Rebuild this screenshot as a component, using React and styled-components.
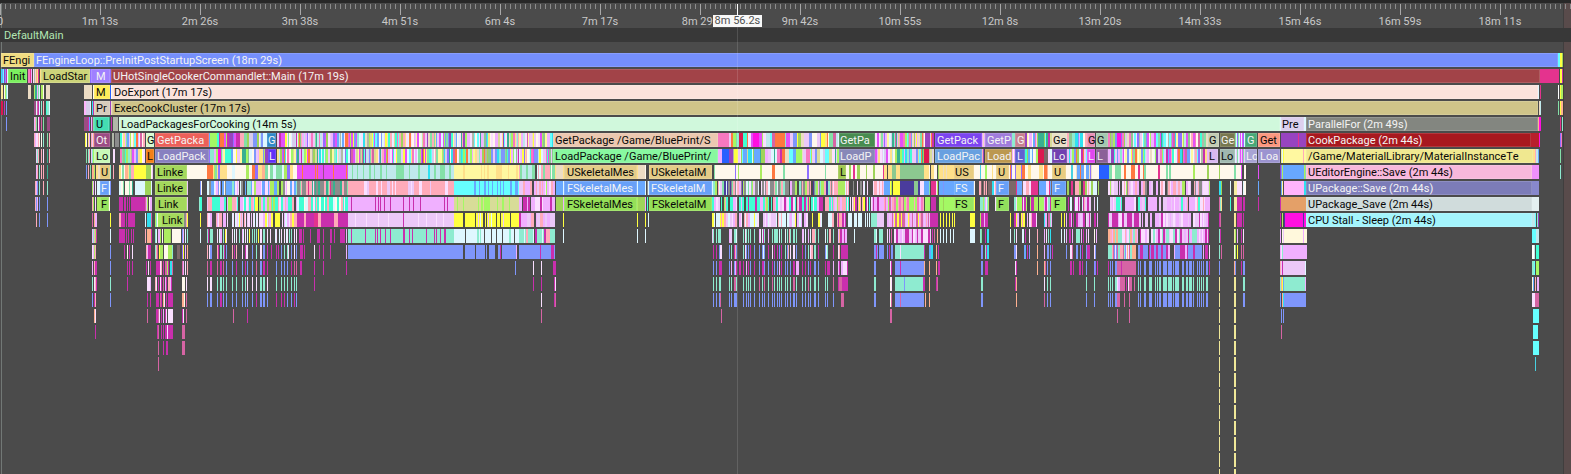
import React from 'react';
import styled, { createGlobalStyle } from 'styled-components';

const Global = createGlobalStyle`
  * { box-sizing: border-box; }
  body { margin: 0; background: #4b4b4b; font-family: Roboto, "Liberation Sans", sans-serif; font-size: 11px; font-kerning: none; }
`;

/* Units of the time axis that span the full track width. */
const SPAN = 1571;

const INK = {
  c: '#8eebd0', b: '#7f96fb', m: '#c92fad', p: '#ecc8f8', k: '#f0b0ff', w: '#fff8ec',
  i: '#def7ff', y: '#ffff40', g: '#acec60', o: '#9fd45a', s: '#ffabba', t: '#40ffd4',
  r: '#d664a4', a: '#66ffff', n: '#8c8c8c', h: '#fadfff', u: '#4a3c9c', e: '#ffb090',
  v: '#9070ff', d: '#e4338e', z: '#38b090', q: '#ffe08a', l: '#68a8ff', f: '#30e0f0',
  x: '#4b4b4b', j: '#e450f8', K: '#c0e8ec', G: '#a4f864', B: '#2860ff', T: '#84e0a8',
  Y: '#fff8a0', L: '#f4eca0', O: '#ff7840', D: '#d8dc98', P: '#9c4c84', M: '#ff10e0',
  C: '#48d0e0', S: '#f0e898', R: '#dc1850', E: '#ecdcc4', A: '#b0b8a8', W: '#ffffff',
  F: '#ffb4fc', H: '#e4a068', Q: '#fff8dc', N: '#8cc890', U: '#7c6868', V: '#9844c0',
  J: '#f878c0', Z: '#d8ccec', X: '#b8202c', I: '#f090fc', _: '#8888cc', $: '#e4f0f0',
};

function random(seed) {
  let s = seed * 7919 + 17;
  return () => {
    s = (s * 1103515245 + 12345) & 0x7fffffff;
    return (s >> 8) / 0x7fffff;
  };
}

/* Dense run of short calls between two times. */
function fill(from, to, palette, seed = 1, max = 2) {
  const rnd = random(seed + from);
  const out = [];
  let x = from;
  while (x < to) {
    const w = Math.min(1 + Math.floor(rnd() * max), to - x);
    out.push({ x, w, c: palette[Math.floor(rnd() * palette.length) % palette.length] });
    x += w;
  }
  return out;
}

/* "start:width colour" tokens; the width is 1 when left out. */
function bars(text) {
  return text.trim().split(/\s+/).map((t) => {
    const m = t.match(/^(\d+)(?::(\d+))?([\w$])$/);
    return { x: +m[1], w: m[2] ? +m[2] : 1, c: m[3] };
  });
}

/* Calls that recur at the same times on several depths. */
function columns(list, palette, seed) {
  const rnd = random(seed);
  return list.trim().split(/\s+/).map((t) => {
    const [x, w] = t.split(':');
    return { x: +x, w: +(w || 1), c: palette[Math.floor(rnd() * palette.length) % palette.length] };
  });
}

const MID = '713 716 719:2 729 731 734:2 736 743 746 748 750 754 759 762 764 768 772 774 777 779 781 785 787 790 793:2 796 802 805 808 810 814:2 818 825 827 833';
const EARLY = '207 210:2 217 220:2 223 226 232 236 242 245 247 252 256 260:2 263:2 267 276 281 284 287 291 294 296';
const LATE = '1138 1140 1144:2 1149:3 1155 1157 1159:2 1163:4 1168:4 1173 1175:4 1182:2 1186:2 1189:3 1193 1197 1199 1201 1203 1206:2';
const LATE_HEAD = '1108 1110 1112 1115:2';

const RAINBOW = 'cbmpkwiygostrahqlfGjTYJZKAjEvhiwpkDNOVz';

const t = (x, end, bg, text, light = 0, indent = 2) => ({ x, end, bg, text, light, indent });

const ROWS = [
  {
    labels: [t(1, 34, '#f0dc82', 'FEngi'), t(34, 1558, '#758ffc', 'FEngineLoop::PreInitPostStartupScreen (18m 29s)', 1)],
    bars: [...bars('1558:2a 1560:2y 1562o')],
  },
  {
    labels: [t(8, 27, '#7cf060', 'Init'), t(41, 90, '#cdd47a', 'LoadStar'), t(91, 110, '#a080ff', 'M', 1, 5), t(111, 1540, '#a24348', 'UHotSingleCookerCommandlet::Main (17m 19s)', 1)],
    bars: [...bars('1f 2l 3a 4V 5b 6m 7:1i 28:2J 30d 31k 33h 34A 35E 36e 37q 38d 40q 90v 110v 1540:19d 1560:2y 1562m')],
  },
  {
    labels: [t(94, 110, '#ffec5a', 'M'), t(112, 1538, '#fbe3dc', 'DoExport (17m 17s)')],
    bars: [...bars('1L 2q 4w 5g 6c 7:1i 28:3E 34g 35:2z 37k 38T 39i 41:2g 43w 46:2E 48:2E 84:8E 93w 110B 111w 1538i 1540d 1558W 1560y 1561:2g')],
  },
  {
    labels: [t(94, 110, '#d8ccbc', 'Pr'), t(112, 1538, '#cfc489', 'ExecCookCluster (17m 17s)')],
    bars: [...bars('1:2R 4m 6b 34:2P 36i 37r 38m 39i 41c 43s 46t 47:2c 49i 84:2F 86:4Z 90i 92f 93m 110V 111E 1539E 1540K 1558T 1560y 1561:2e')],
  },
  {
    labels: [t(94, 109, '#44ddb2', 'U'), t(119, 1280, '#d0f8dc', 'LoadPackagesForCooking (14m 5s)'), t(1281, 1304, '#dcd0ee', 'Pre', 0, 1), t(1306, 1538, '#838680', 'ParallelFor (2m 49s)', 1)],
    bars: [...bars('6b 34k 35s 36T 38h 39m 41r 43T 47:3P 84:4P 88m 89l 91k 92P 93T 109z 111m 113:5A 1280i 1304:2i 1538e 1539:2M 1560d 1562c')],
  },
  {
    labels: [
      t(94, 110, '#9c4c84', 'Ot', 1), t(146, 154, '#d8fbd0', 'G', 0, 1), t(155, 209, '#ec605a', 'GetPacka', 1), t(267, 276, '#3088c8', 'G', 1, 1),
      t(553, 718, '#ecc8b0', 'GetPackage /Game/BluePrint/S'), t(839, 875, '#488c50', 'GetPa', 1, 1), t(935, 982, '#7c44f0', 'GetPack', 1), t(985, 1012, '#a07cdc', 'GetP', 1),
      t(1015, 1025, '#c88090', 'G', 1), t(1052, 1067, '#e8e0c8', 'Ge', 0, 1), t(1087, 1095, '#e890b8', 'G', 0, 1), t(1096, 1108, '#a4c8b0', 'G', 0, 1),
      t(1208, 1219, '#c4ccb4', 'G', 0, 1), t(1220, 1235, '#787850', 'Ge', 1, 1), t(1245, 1257, '#48a878', 'G', 1), t(1258, 1280, '#fc9880', 'Get'), t(1306, 1531, '#a8181f', 'CookPackage (2m 44s)', 1),
    ],
    bars: [
      ...bars('34s 35k 36:2h 38s 39w 41w 43c 47T 49s 85y 86w 88q 89k 91s 92p 93e 112:2A 115:4n'), ...fill(120, 145, RAINBOW, 4), ...fill(209, 267, RAINBOW, 2, 4),
      ...bars('210:7G'), ...fill(277, 553, RAINBOW, 5, 2), ...fill(718, 839, RAINBOW, 6, 4), ...bars('722:7J 739:4R 753:6M 775:10O'),
      ...fill(875, 934, RAINBOW, 7), ...bars('925:5V'), ...fill(982, 985, 'cEk', 1), ...bars('1012:3c'), ...fill(1025, 1052, RAINBOW, 8), ...bars('1038:6z'),
      ...fill(1067, 1087, RAINBOW, 9, 3), ...fill(1108, 1208, RAINBOW, 10, 2), ...bars('1117:4M 1178:4v'), ...fill(1235, 1245, 'jTvyi', 3, 1),
      ...bars('1281:25V 1298d 1531:8X 1539M 1560v 1561J'),
    ],
  },
  {
    labels: [
      t(94, 110, '#c8f8b8', 'Lo'), t(146, 154, '#f48018', 'L', 0, 1), t(155, 209, '#8880c0', 'LoadPack', 1), t(268, 276, '#6030f8', 'L', 1, 1),
      t(553, 718, '#88f8a0', 'LoadPackage /Game/BluePrint/'), t(839, 875, '#8888b8', 'LoadP', 1, 1), t(935, 982, '#68a0e0', 'LoadPac', 1), t(985, 1012, '#bc9850', 'Load', 1),
      t(1015, 1025, '#6060d0', 'L', 1), t(1052, 1067, '#7040b0', 'Lo', 1, 1), t(1087, 1095, '#e048f0', 'L', 1, 1), t(1096, 1108, '#8c6098', 'L', 1, 1),
      t(1208, 1218, '#d8b8f0', 'L', 0, 1), t(1220, 1235, '#a0b8b0', 'Lo', 0, 1), t(1245, 1257, '#a8a4d4', 'Lo', 1, 1), t(1258, 1280, '#9c94d0', 'Loa', 1), t(1306, 1533, '#f0e890', '/Game/MaterialLibrary/MaterialInstanceTe'),
    ],
    bars: [
      ...bars('36p 37c 38s 41s 43h 47z 49s 86T 88c 89s 91p 92c 93G 113:2h'), ...fill(120, 145, RAINBOW, 14), ...fill(209, 268, RAINBOW, 12, 4), ...bars('218:3M 225:6t'),
      ...fill(277, 553, RAINBOW, 15, 2), ...bars('534:4b'), ...fill(718, 839, RAINBOW, 16, 4), ...bars('722:7B 734:4y 754:6l 796:6G'),
      ...fill(875, 934, RAINBOW, 17), ...bars('924:5R'), ...bars('982s 983V'), ...fill(1012, 1015, 'cwk'), ...fill(1025, 1052, RAINBOW, 18), ...bars('1038:6R 1044:4U'),
      ...fill(1067, 1087, RAINBOW, 19), ...fill(1108, 1208, RAINBOW, 20, 2), ...fill(1235, 1245, 'jiTwp', 3, 1),
      ...bars('1281L 1282i 1283y 1284:19Y 1303s 1304:2Y 1533:2q 1535s 1536:2K 1538l 1560T'),
    ],
  },
  {
    labels: [
      t(100, 110, '#e4c87c', 'U', 0, 1), t(155, 187, '#a4d85c', 'Linke'), t(564, 637, '#e4cc88', 'USkeletalMes', 0, 3), t(649, 712, '#e4cc88', 'USkeletalM'),
      t(838, 846, '#a0c850', 'L'), t(954, 974, '#e8cc80', 'US', 0, 1), t(996, 1009, '#e8cc80', 'U', 0, 2), t(1052, 1066, '#e8cc80', 'U', 0, 2), t(1306, 1532, '#f8b8dc', 'UEditorEngine::Save (2m 44s)'),
    ],
    bars: [
      ...bars('36k 37:1s 39c 41s 43s 47z 86b 88s 90T 92:2e 94g 96:2q 98:2E 110c 113s'), ...fill(119, 134, 'ssTeqw', 2, 3), ...bars('134:12y 146:5o 151w 152p'),
      ...bars('187:20w'), ...fill(207, 297, 'wwwwwqqevTgOi', 3, 3), ...bars('297:51j 302O 315O 317O 323P 333O 346O 348:106K 352T 357T 363T 369:2T 374T 380:2T 386T 396:8T 409T 418:2T 428:2f 434:2T 440:5T 449:2T'),
      ...bars('454:65Y 463:2q 481q 484q 487:2q 496:6q 508q 516:2q'), ...fill(519, 555, 'TTiKsswyT', 7, 2), ...bars('535:2x 555q 556:7E 563q 637:8q 638:7E 645x 648x 645w'),
      ...fill(712, 718, 'wTzx', 9), ...fill(718, 838, 'wwwwwwwwwwwOTgv', 10, 3), ...fill(846, 884, 'wwwwwwwwOdo', 11, 3), ...bars('884:3q 888:4q 892:4N 896:4q 900:24N 924:5q 929w 931:3q 934:3w 938o 939:15q 943E 946E'),
      ...fill(974, 996, 'wwwwqw', 13, 3), ...bars('980C 985:2G 992q'), ...fill(1009, 1052, 'wwwwqwvwO', 14, 3), ...bars('1016:5q 1039:4q 1047e'), ...fill(1066, 1099, 'wwwwwEwlw', 15, 3),
      ...bars('1071:2C 1080O 1090v 1099:10B'), ...fill(1109, 1207, 'wwwwwwwwwwwwwTOgd', 16, 3), ...bars('1207:2o 1209:32w 1219:1o 1234:2T 1241j 1244:2w 1258j 1280V 1281b 1282g 1283l 1284:20l 1304g 1305T 1532:7I 1560c'),
    ],
  },
  {
    labels: [
      t(100, 109, '#68a0f8', 'F', 1, 1), t(155, 187, '#a4d85c', 'Linke'), t(564, 637, '#68a0f8', 'FSkeletalMes', 1, 3), t(649, 712, '#68a0f8', 'FSkeletalM', 1),
      t(954, 974, '#68a8fc', 'FS', 1, 1), t(996, 1009, '#68a0f8', 'F', 1), t(1052, 1066, '#68a0f8', 'F', 1), t(1306, 1532, '#7c7cb8', 'UPackage::Save (2m 44s)', 1),
    ],
    bars: [
      ...bars('35s 36k 37b 39c 43s 47c 92g 93k 95h 97:3i 109i 110b 119:2i 121:2w 123T 125:4w 129T 130:2w 132z 135:10i 145:6o 151i 186w 187p 199x 200b 201w'),
      ...fill(207, 297, 'hhccknnllxgbwi', 22, 2), ...bars('228:4l'), ...fill(297, 348, 'nnnTshzsd', 23, 2), ...fill(348, 454, 'sssssssssssph', 24, 3), ...bars('454:65a 474:2l 479l 484:2l 488l 492l 497l 500l 503l 510:2l 515:3l'),
      ...fill(519, 555, 'ssshpkG', 26, 2), ...bars('532:2x 556:7l 563i 637i 638:7l 645i 647n 648i'), ...fill(712, 838, 'nnnspksihgcTux', 27, 2), ...bars('838:7g'), ...fill(845, 874, 'xxxhinsx', 28, 1),
      ...fill(874, 884, 'sshp', 2), ...bars('884:6l 890y 891g 893:3y'), ...fill(896, 924, 'uuuNTyh', 30, 4), ...bars('902:7u 924:5l 929T 931:5d 936h 937g 939:15l 943b 974w'),
      ...fill(979, 996, 'hsdTxUf', 31, 1), ...bars('989:3U 1009:6U'), ...fill(1015, 1052, 'ldhUxlhs', 32, 3), ...bars('1017:5l 1031:5d 1039:5l'), ...fill(1067, 1099, 'dhhxxiso', 33, 2),
      ...fill(1108, 1210, 'sshhknpxgp', 34, 2), ...bars('1219:2f 1221o 1230i 1234:3L 1237:5h 1243i 1244:2w 1258l 1281l 1282Y 1284:20F 1304:2f 1532:7_'),
    ],
  },
  {
    labels: [
      t(100, 109, '#94e05c', 'F', 0, 1), t(155, 187, '#a4d85c', 'Link', 0, 3), t(564, 637, '#94e058', 'FSkeletalMes', 0, 3), t(649, 712, '#94e058', 'FSkeletalM', 0, 3),
      t(954, 974, '#98e860', 'FS', 0, 1), t(996, 1009, '#90e05c', 'F'), t(1052, 1066, '#94e85c', 'F'), t(1306, 1532, '#d0dcdc', 'UPackage_Save (2m 44s)'),
    ],
    bars: [
      ...bars('35s 36b 37k 39b 47b 92s 93g 95h 97:3g 109w 119:4m 124:2m 127m 129m 131:14m 145r 146k 147g 149w 150:2k 186i 187p 199c 200:2t'),
      ...fill(207, 297, 'tthkxpgsyt', 42, 2), ...bars('213:7t 228:4G'), ...fill(297, 348, 'ttthwsi', 43, 2), ...bars('348:106k 351m 375m 378m 380m 384m 390m 403m 409m 413m 420m 444m 447m'),
      ...bars('454:65D 457G 463G 478G 481:2G 484:6G 497G 502:2G 509G'),
      ...fill(519, 555, 'kkkkhmx', 46, 2), ...bars('556:7o 563k 637g 638:7o 645k 647t'), ...fill(712, 838, 'ttttksshpxgm', 47, 2), ...fill(838, 846, 'skss', 1), ...fill(846, 872, 'ymxsth', 48, 1),
      ...fill(872, 884, 'kkm', 49, 3), ...fill(884, 924, 'GGrJJks', 50, 2), ...bars('925:5G 931:5m 939:15G 943o 974y'), ...fill(979, 990, 'hgcskx', 51, 1), ...bars('995h'),
      ...fill(1014, 1052, 'mkhGxgxc', 52, 2), ...bars('1017:5G 1031:3m 1039:5G'), ...fill(1067, 1098, 'mhsxxiyp', 53, 2), ...fill(1108, 1210, 'kkkkptshx', 54, 2),
      ...bars('1219r 1220c 1221q 1230t 1234:3L 1237:5m 1243:2m 1258m 1280m 1281:25H 1532:7$'),
    ],
  },
  {
    labels: [t(161, 184, '#a4d85c', 'Link', 0, 1), t(1306, 1532, '#a4f4fc', 'CPU Stall - Sleep (2m 44s)')],
    bars: [
      ...bars('36s 39b 47b 92r 94e 95:2k 110y 119:2s 121:4m 126m 128:2m 130:5m 145i 147:4f 151r 155g 156c 157w 158:3g 184:2n 186s 187y 200y'),
      ...fill(207, 212, 'khs', 1), ...fill(216, 228, 'hxksx', 1), ...fill(232, 260, 'yhhxspi', 61, 1), ...fill(260, 297, 'ykhxsyi', 62, 2), ...fill(297, 348, 'mmmmmmds', 63, 4), ...bars('348:106p 355h 366h 378h 388h 403m 418h 426h 436h 443h'),
      ...bars('454:65y 463:2x 475x 478p 480i 483:2x 486x 488p 491i 496x 500x 503p 510x'), ...fill(519, 555, 'pppkkms', 66, 3), ...bars('534:2x 563y 637y 645y 648i'), ...fill(712, 838, 'hhppkisxyix', 67, 2), ...fill(838, 846, 'ksme', 1), ...fill(847, 870, 'iixx', 68, 1), ...fill(871, 884, 'cpppp', 3, 4),
      ...fill(887, 930, 'rsykkrp', 69, 1), ...bars('930:8m 940y 943y 946y 949y 952y 954y 970:5y 980g 981:3m 984k 985:3m 1010y'),
      ...fill(1014, 1038, 'khsymxmx', 70, 2), ...fill(1043, 1053, 'rkxcf', 71, 1), ...bars('1061y 1064y 1066:1k 1069:2m 1071k 1073:1m'), ...fill(1076, 1098, 'pkxmxih', 72, 2),
      ...fill(1108, 1138, 'mmmmphk', 73, 3), ...fill(1138, 1208, 'kpmkphx', 74, 2), ...bars('1208m 1219m 1220r 1234L 1235q 1237:5m 1243m 1258x 1280m 1282g 1284u 1285:19M 1303u 1304:2M 1532:3K 1535a 1537c 1538V'),
    ],
  },
  {
    bars: [
      ...bars('92k 93c 94s 95g 96m 110i 119:6m 126m 128m 131m 133m 145s 147:4e 151m 155c 156i 158:2k 160g 162w 164:7g 170o 172:9w 182b 183k 185i 187c 200i'),
      ...columns(EARLY, 'ccchihkc', 80), ...columns('208 212 219 225 234 239 243 249 254 258 270 275 279 286 289', 'imchy', 81), ...bars('299:3m 303m 310m 317:3m 323m 330:2m 334m 340:5m 346k'),
      ...bars('348:106c 351m 365m 375m 377m 380m 385m 390m 403:2m 409m 412m 426m 434m 436m 440m 444:2m 454:65i 465x 477:2c 480c 484x 491x 496x 502x 509:2c 514x'), ...fill(519, 555, 'ccccims', 84, 2), ...bars('534:1x 563i 637i 645i'),
      ...columns(MID, 'ccccki', 85), ...columns('712 718:3 730:2 745 760 763 775:2 789 803 812:3 829:2', 'cmksph', 86), ...fill(838, 847, 'mmke', 1), ...bars('854i 874:2c 876i 879:4c 887h 889k 891r'),
      ...fill(894, 930, 'ppkmmh', 87, 2), ...bars('930p 932m 934r 937e 940i 943i 946i 950i 953i 970:5i 980c 981T 985m 987:2f 1010i 1014c 1016h 1022:2i 1025m 1029h 1037s 1044k 1046h 1048c 1050f'),
      ...bars('1061i 1064i 1066k 1069:2m 1072k 1076:4c 1081k 1083m 1086k 1088h 1094w 1096k'), ...fill(1108, 1138, 'cchkse', 88, 2), ...fill(1138, 1208, 'cchpkmx', 89, 2), ...bars('1208m 1219c 1220m 1234L 1235g 1237k 1241m 1243h'),
      ...bars('1280k 1282:2w 1283p 1284:19Q 1303k 1304:3Q 1532:4a 1536:3K'),
    ],
  },
  {
    bars: [
      ...bars('92h 93k 94g 95s 110b 124m 127w 129m 132h 146s 147k 148:3m 155c 156s 157r 159y 160:3g 164:4w 168:4g 172c 177:3U 182v 183y 185k 187e'),
      ...columns(EARLY, 'bbchms', 90), ...columns('209 218 224 234 246 271 278 288', 'hbm', 91), ...bars('300:3m 304m 314h 319m 323m 330m 346k 348:115b 465:10b 476:9b 486b 489:6b 498:3b 500m 502:14b 516k'),
      ...fill(519, 555, 'bbbbbmb', 92, 3), ...columns(MID, 'bbbchm', 93), ...columns('720:2 735 745 763 788 811:2 826', 'hsim', 94), ...bars('838h 839s 841:7m 874:2b 876m 877b 879:5b 887b 889m 891:2b 895:30c 900h 924m 929:2l 931:2f 936e 938m'),
      ...bars('981:2b 985c 986m 987:2f 1014:2b 1016h 1024:2l 1027m 1029b 1037e 1044k 1047:2b 1050b 1052m 1066b 1070:2h 1072r 1076:2b 1080b 1082m 1086b 1087:3m 1094h 1095b'),
      ...fill(1108, 1136, 'ccrbhes', 95, 1), ...fill(1138, 1208, 'bbbbmmkx', 96, 2), ...bars('1209h 1219c 1221r 1234w 1235g 1237y 1241r 1243r 1280k 1281h 1282c 1283:24k 1532:2W 1534K 1536:3t'),
    ],
  },
  {
    bars: [
      ...bars('92k 94s 95:2m 110b 127m 129m 132m 146m 148h 150m 156:4m 160h 161s 163m 165:2r 167g 168m 170:2f 172r 182r 183k 185h 187s'),
      ...columns(EARLY, 'bbmmr', 100), ...bars('300:2m 314m 323m 346m 515b 533h 541h 553:3m'), ...columns(MID, 'bbmmk', 101), ...columns('720:2 735 739:2 763 781 797:2 828:2', 'mmkr', 102),
      ...bars('838k 839m 841:2k 843:4h 847m 874:2b 890h 891m 895:30b 900m 924e 929e 936e 938m 939m 981:2b 985:3m 1015h 1016m 1037e 1044e 1045r 1047b 1050b 1070:2m 1073m 1079:2m 1082m 1086b 1094b 1095v 1097m'),
      ...columns(LATE_HEAD, 'bbm', 103), ...fill(1117, 1136, 'rrwrrm', 104, 3), ...columns(LATE, 'b', 1), ...bars('1209m 1219b 1234e 1235b 1241m 1243:2b 1280s 1281p 1282m 1283:23p 1305i 1532:2c 1534a 1536:3G'),
    ],
  },
  {
    bars: [
      ...bars('92c 94h 95s 96m 110c 127m 147:3h 150k 155s 156h 158m 160h 161m 163r 165k 166m 168:2s 170k 171m 182:2w 184w 186h'),
      ...columns(EARLY, 'cccch', 110), ...bars('314m 533m 541m 554m 555h'), ...columns(MID, 'ccccccr', 111), ...bars('838m 839:3r 842:6m 874:2c 890w 891h 895:5c 900:4c 904b 905:19c 923:2m 929e 936m 937r 981:2c 1015m 1016e 1044h 1047c 1050c 1086c 1094c'),
      ...columns(LATE_HEAD, 'c', 1), ...bars('1117h 1118:2k 1120:5r 1126m 1128h 1129:3r 1134r'), ...columns(LATE, 'c', 1), ...bars('1219S 1234:2S 1243:2c 1280c 1281e 1282y 1283l 1284:21c 1305k 1532Q 1533l 1535s 1537:2k'),
    ],
  },
  {
    bars: [
      ...bars('92b 94m 95s 110b 147m 150m 156:2m 158m 160r 161m 163e 164h 166m 168:5m 182:2e 184w 186r'), ...columns(EARLY, 'bbbbbm', 120), ...bars('541h 554m 555r'),
      ...columns(MID, 'b', 121), ...bars('720r 841:3r 874:2b 890w 891r 895:5b 900r 901:23b 925e 929e 981:2b 1016e 1044r 1047b 1050b 1086b 1094b'),
      ...columns(LATE_HEAD, 'b', 1), ...bars('1117:3r 1124r 1129r'), ...columns(LATE, 'b', 1), ...bars('1219S 1234:2S 1243:2b 1280b 1282e 1283f 1284:22b 1532:3h 1535:4r'),
    ],
  },
  { bars: bars('94e 95h 147r 156:2m 158r 159h 161m 163k 165m 166h 168:5h 182m 183h 186r 233r 247m 541r 721r 890:2r 1117r 1129r 1219S 1234:2S 1281b 1283b 1533:6a') },
  { bars: bars('95m 157m 158r 161m 163m 165:2m 167h 168:5m 182:3r 1219S 1234:2S 1281r 1533:5a') },
  { bars: bars('158r 163m 166:2m 182:3r 1219S 1234:2S 1533:6a') },
  { bars: bars('158r 1219S 1234:2S 1535C') },
  ...Array.from({ length: 7 }, () => ({ bars: bars('1219S 1234:2S') })),
];

/* The hairline at the left marks the session start, the tinted edge its end. */
const Page = styled.main`
  position: relative;
  display: flex;
  flex-direction: column;
  height: 100vh;
  overflow: hidden;
  background:
    linear-gradient(to right, transparent 1px, #727876 1px, #727876 2px, transparent 2px),
    linear-gradient(to left, #594b4b 7px, #403e3e 7px, #403e3e 8px, #4b4b4b 8px);
`;

const Ruler = styled.header`
  display: flex;
  flex: none;
  height: 28px;
  border-top: 3px solid #282828;
`;

const Tick = styled.div`
  flex: ${(p) => p.$span} 1 0;
  min-width: 0;
`;

const TickMarks = styled.svg`
  display: block;
  width: 100%;
  height: 12px;
`;

const TickLabel = styled.div`
  display: flex;
  justify-content: center;
  width: 0;
  line-height: 13px;
  color: #c8c8c8;
  white-space: nowrap;
`;

const ThreadHeader = styled.h2`
  flex: none;
  margin: 0;
  height: 14px;
  padding-left: 4px;
  font-size: 11px;
  font-weight: 400;
  line-height: 16px;
  color: #b2e6b2;
  background: #383838;
`;

const Track = styled.section`
  display: flex;
  flex: none;
  flex-direction: column;
  gap: 2px;
  padding-top: 11px;
`;

const Row = styled.div`
  display: flex;
  height: 14px;
`;

const Call = styled.div`
  flex: ${(p) => p.$span} 1 0;
  min-width: 0;
  text-indent: ${(p) => p.$indent}px;
  overflow: hidden;
  white-space: nowrap;
  line-height: 16px;
  color: ${(p) => (p.$light ? '#f4f4f4' : '#080808')};
  background: ${(p) => p.$bg};
  box-shadow: inset 0 0 0 1px rgba(255, 255, 255, 0.14);
`;

const Strip = styled.svg`
  flex: ${(p) => p.$span} 1 0;
  min-width: 0;
  width: 0;
  height: 14px;
`;

const Cursor = styled.div`
  position: absolute;
  top: 4px;
  bottom: 0;
  left: 46.91%;
  display: flex;
  justify-content: center;
  align-items: flex-start;
  width: 1px;
  padding-top: 11px;
  background: linear-gradient(#ffffff 11px, rgba(255, 255, 255, 0.13) 11px);
`;

const CursorTime = styled.output`
  flex: none;
  padding: 0 2px;
  line-height: 12px;
  color: #505050;
  background: #f8f8f8;
  white-space: nowrap;
`;

const TIMES = ['0', '1m 13s', '2m 26s', '3m 38s', '4m 51s', '6m 4s', '7m 17s', '8m 29s', '9m 42s', '10m 55s', '12m 8s', '13m 20s', '14m 33s', '15m 46s', '16m 59s', '18m 11s'];

function TimeRuler() {
  return (
    <Ruler>
      {TIMES.map((time, i) => {
        const span = i === TIMES.length - 1 ? SPAN - 1500 : 100;
        return (
          <Tick key={time} $span={span}>
            <TickMarks viewBox={`0 0 ${span} 12`} preserveAspectRatio="none" shapeRendering="crispEdges" aria-hidden="true">
              {Array.from({ length: Math.ceil(span / 5) }, (_, n) => (
                <rect key={n} x={n * 5} y="1" width="1" height={n ? 5 : 11} fill={n ? '#8c8c8c' : '#a8a8a8'} />
              ))}
            </TickMarks>
            <TickLabel>{time}</TickLabel>
          </Tick>
        );
      })}
    </Ruler>
  );
}

function CallStrip({ from, to, items }) {
  const shown = items.filter((b) => b.x < to && b.x + b.w > from);
  return (
    <Strip $span={to - from} viewBox={`0 0 ${to - from} 14`} preserveAspectRatio="none" shapeRendering="crispEdges" aria-hidden="true">
      {shown.map((b, i) => (
        <rect key={i} x={b.x - from} y="0" width={b.w} height="14" fill={INK[b.c]} />
      ))}
    </Strip>
  );
}

function CallRow({ labels = [], items }) {
  const parts = [];
  let at = 0;
  labels.forEach((l) => {
    if (l.x > at) parts.push(<CallStrip key={at} from={at} to={l.x} items={items} />);
    parts.push(
      <Call key={`${l.x}-call`} $span={l.end - l.x} $bg={l.bg} $light={l.light} $indent={l.indent}>
        {l.text}
      </Call>
    );
    at = l.end;
  });
  if (at < SPAN) parts.push(<CallStrip key={at} from={at} to={SPAN} items={items} />);
  return <Row>{parts}</Row>;
}

export default function App() {
  return (
    <>
      <Global />
      <Page>
        <TimeRuler />
        <ThreadHeader>DefaultMain</ThreadHeader>
        <Track aria-label="DefaultMain">
          {ROWS.map((row, i) => (
            <CallRow key={i} labels={row.labels} items={row.bars} />
          ))}
        </Track>
        <Cursor>
          <CursorTime>8m 56.2s</CursorTime>
        </Cursor>
      </Page>
    </>
  );
}
